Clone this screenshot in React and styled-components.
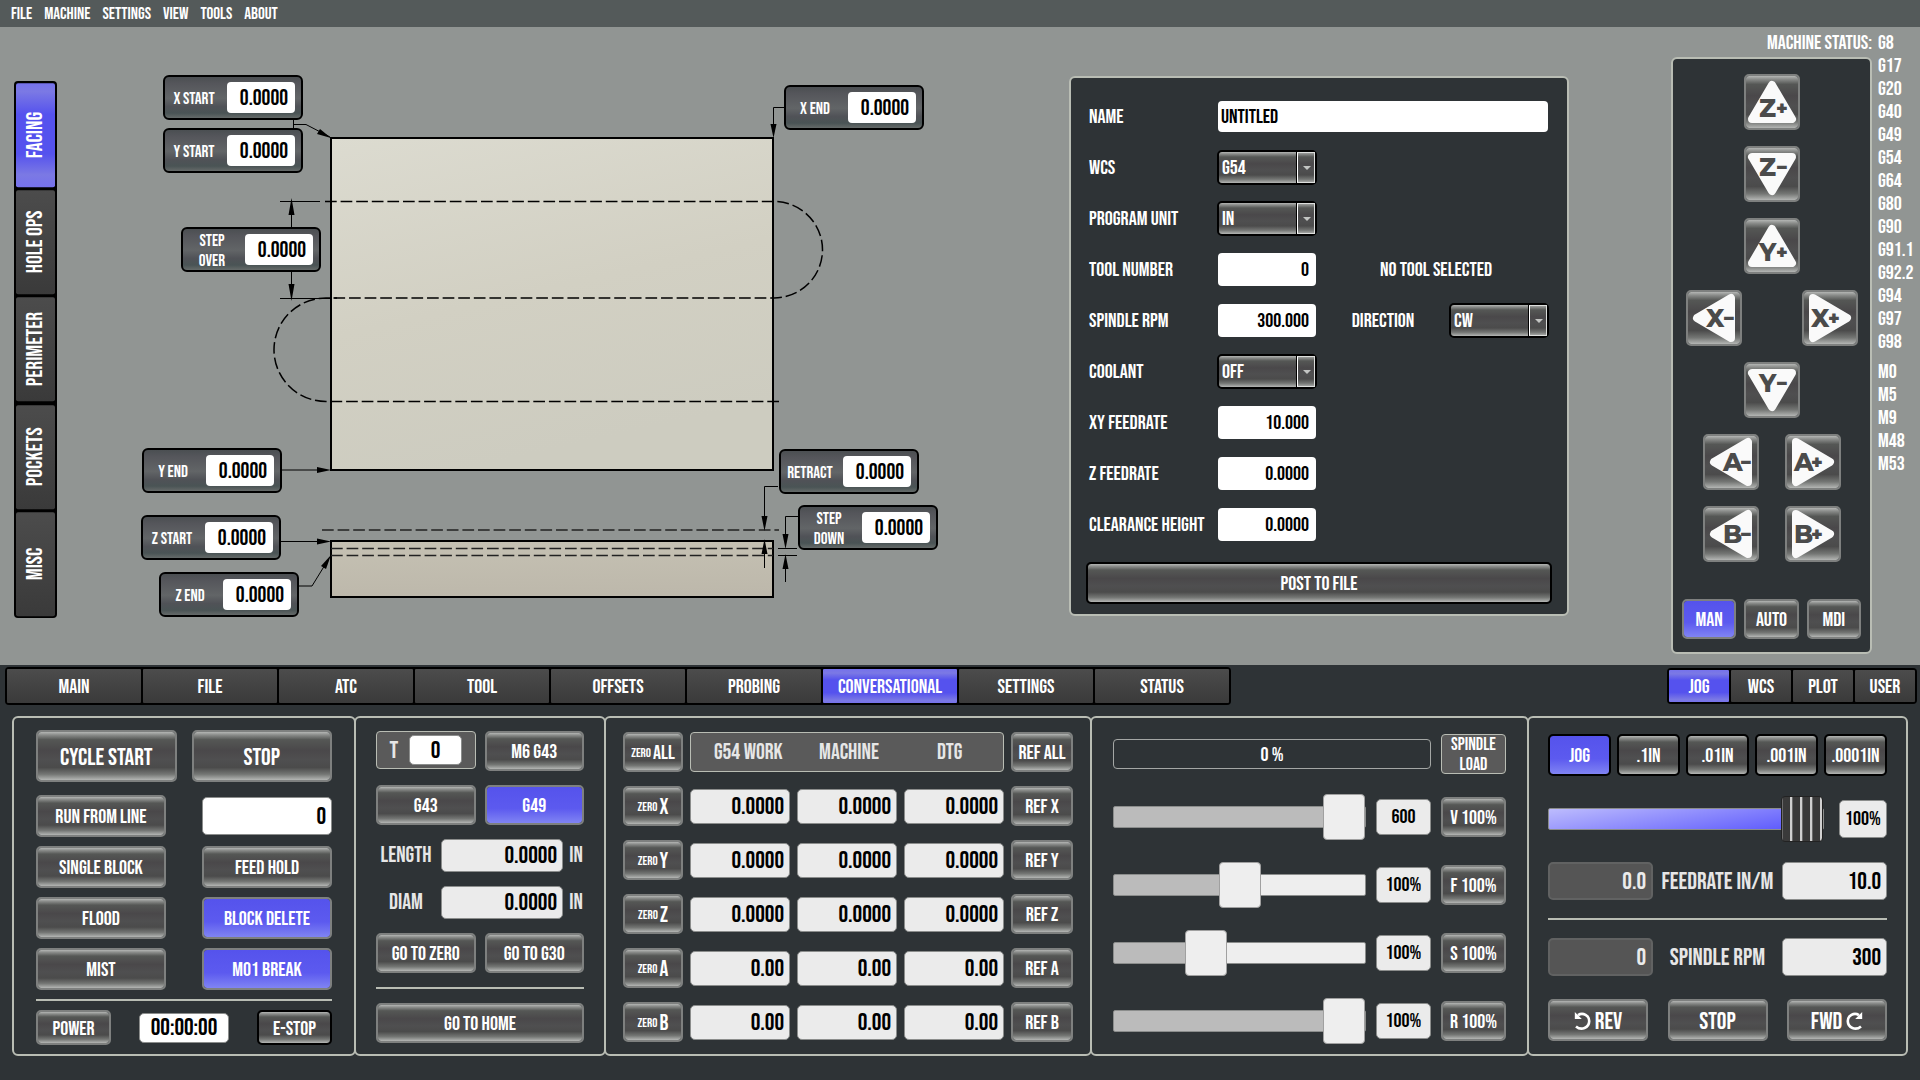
import React from "react";
import styled, { createGlobalStyle, css } from "styled-components";

const GlobalStyle = createGlobalStyle`
  * {
    box-sizing: border-box;
  }

  body {
    margin: 0;
    background: #2e3336;
    color: #fff;
    font-family: "Bebas Neue", Oswald, "Roboto Condensed", sans-serif;
    font-size: 20px;
  }

  button, input, select {
    margin: 0;
    padding: 0;
    font: inherit;
    color: inherit;
  }
`;

const steel = css`
  background: linear-gradient(
    to bottom,
    #b4b6b4 0%,
    #8b8d8b 6%,
    #555755 16%,
    #4a484a 38%,
    #4f4f50 58%,
    #4b4b4b 74%,
    #747674 88%,
    #b4b6b4 100%
  );
`;

const blue = css`
  background: linear-gradient(to bottom, #5553ec 0%, #5c5aef 60%, #8084f3 100%);
`;

const blueTab = css`
  background: linear-gradient(
    to bottom,
    #7672ec 0%,
    #7b79e4 12%,
    #5552ee 32%,
    #5552ee 70%,
    #7b79e4 92%,
    #7672ec 100%
  );
`;

const Screen = styled.div`
  display: flex;
  flex-direction: column;
  min-height: 100vh;
`;

const MenuBar = styled.nav`
  display: flex;
  align-items: center;
  gap: 12px;
  height: 27px;
  padding: 0 11px;
  background: #545a5a;
`;

const MenuItem = styled.a`
  color: #fff;
  font-size: 17px;
  line-height: 24px;
  text-decoration: none;
`;

const Main = styled.main`
  display: flex;
  flex: 1;
  align-items: flex-start;
  padding: 0 0 11px 14px;
  background: #919593;
`;

const SideTabs = styled.div`
  display: flex;
  flex-direction: column;
  gap: 3px;
  width: 43px;
  height: 537px;
  margin-top: 54px;
  padding: 2px;
  border-radius: 4px;
  background: #000;
`;

const SideTab = styled.button`
  flex: 1;
  border: 0;
  border-radius: 2px;
  background: linear-gradient(to top, #4c4c4c, #3a3a3a);
  font-size: 22px;
  writing-mode: vertical-rl;
  transform: rotate(180deg);
  ${(props) => props.$active && blueTab}
`;

const Canvas = styled.div`
  position: relative;
  flex: 1;
  min-width: 890px;
  height: 620px;
`;

const Drawing = styled.svg`
  display: block;
  width: 890px;
  height: 620px;
`;

const Callout = styled.label`
  position: absolute;
  left: ${(props) => props.$x}px;
  top: ${(props) => props.$y}px;
  display: flex;
  align-items: center;
  width: 140px;
  height: 45px;
  padding-right: 6px;
  border: 2px solid #000;
  border-radius: 6px;
  background: linear-gradient(
    to bottom,
    #4b4f52 0%,
    #55565b 16%,
    #626567 52%,
    #505257 72%,
    #4a5455 88%,
    #656a69 100%
  );
`;

const CalloutText = styled.span`
  flex: 1;
  padding: 2px 8px 0 4px;
  font-size: 17px;
  line-height: 20px;
  text-align: center;
`;

const CalloutInput = styled.input`
  width: 68px;
  height: 31px;
  padding: 1px 7px 0 0;
  border: 0;
  border-radius: 4px;
  background: #fff;
  color: #000;
  font-size: 22px;
  text-align: right;
`;

const FormPanel = styled.form`
  width: 500px;
  margin-top: 49px;
  padding: 13px 15px 10px;
  border: 2px solid #b9bdb4;
  border-radius: 6px;
  background: #2e3336;
`;

const FormRow = styled.div`
  display: grid;
  grid-template-columns: 128px 100px 1fr 100px;
  align-items: center;
  height: 51px;
  padding: 0 3px;
`;

const FormInput = styled.input`
  height: 33px;
  margin: 0 1px;
  padding: 0 7px 0 3px;
  border: 0;
  border-radius: 4px;
  background: #fff;
  color: #000;
  text-align: right;
  min-width: 0;
`;

const NameInput = styled(FormInput)`
  grid-column: 2 / -1;
  height: 31px;
  text-align: left;
`;

const ToolNote = styled.span`
  grid-column: 3 / -1;
  padding-left: 6px;
  text-align: center;
`;

const SideLabel = styled.label`
  text-align: center;
`;

const SelectWrap = styled.div`
  position: relative;

  &::before {
    content: "";
    position: absolute;
    top: 2px;
    right: 2px;
    bottom: 2px;
    width: 16px;
    border: 1px solid #dcdedc;
    border-left: 1px solid #fff;
    box-shadow: -1px 0 0 #000;
    pointer-events: none;
  }

  &::after {
    content: "";
    position: absolute;
    top: 16px;
    right: 6px;
    border: 4px solid transparent;
    border-top-color: #c3c5c3;
    border-bottom-width: 0;
    pointer-events: none;
  }
`;

const FormSelect = styled.select`
  display: block;
  width: 100%;
  height: 35px;
  padding-left: 3px;
  border: 2px solid #000;
  border-radius: 5px;
  appearance: none;
  ${steel}
`;

const Button = styled.button`
  display: flex;
  align-items: center;
  justify-content: center;
  gap: ${(props) => props.$gap || 4}px;
  width: ${(props) => (props.$w ? props.$w + "px" : "auto")};
  height: ${(props) => props.$h || 40}px;
  padding-top: 2px;
  border: 2px solid ${(props) => (props.$dark ? "#000" : "#7e807f")};
  border-radius: 5px;
  font-size: ${(props) => props.$size || 20}px;
  white-space: nowrap;
  ${(props) => (props.$active ? blue : steel)}
  background-clip: padding-box;
`;

const PostButton = styled(Button)`
  width: 100%;
  margin-top: 12px;
`;

const JogColumn = styled.div`
  width: 201px;
  margin-left: 102px;
`;

const StatusTitle = styled.div`
  height: 30px;
  line-height: 32px;
  text-align: right;
  white-space: nowrap;
`;

const JogPanel = styled.section`
  display: flex;
  flex-direction: column;
  align-items: center;
  gap: 16px;
  height: 597px;
  padding: 15px 9px 13px;
  border: 2px solid #b9bdb4;
  border-radius: 6px;
  background: #2e3336;
`;

const JogRow = styled.div`
  display: flex;
  gap: ${(props) => props.$gap}px;
`;

const ModeRow = styled.div`
  display: grid;
  grid-template-columns: repeat(3, 1fr);
  gap: 8px;
  width: 100%;
  margin-top: auto;
`;

const JogKey = styled(Button)`
  width: 56px;
  height: 56px;
  padding: 0;
`;

const JogArrow = styled.svg`
  flex: none;
  width: 56px;
  height: 56px;
`;

const AxisText = styled.text`
  fill: #4b4b4b;
  font-family: Montserrat, Inter, "Open Sans", sans-serif;
  font-size: ${(props) => props.$size}px;
  font-weight: ${(props) => props.$weight};
`;

const StatusCodes = styled.ul`
  width: 48px;
  margin: 0;
  padding: 5px 0 0 6px;
  list-style: none;
  line-height: 23px;
`;

const StatusGroup = styled.li`
  margin-bottom: 7px;
  white-space: pre-line;
`;

const Lower = styled.div`
  padding-bottom: 24px;
`;

const TabBar = styled.div`
  display: grid;
  grid-template-columns: minmax(0, 1226fr) minmax(0, 436fr) minmax(0, 250fr);
  align-items: center;
  height: 51px;
  padding: 0 3px 9px 5px;
`;

const Tabs = styled.div`
  display: grid;
  grid-auto-flow: column;
  grid-auto-columns: 1fr;
  gap: 2px;
  height: ${(props) => props.$h}px;
  padding: 2px;
  border-radius: 4px;
  background: #000;
`;

const Tab = styled.button`
  padding-top: 2px;
  border: 0;
  border-radius: 1px;
  background: linear-gradient(to bottom, #4c4c4c, #3a3a3a);
  ${(props) => props.$active && blueTab}
`;

const UserTabs = styled(Tabs)`
  grid-column: 3;
`;

const Panels = styled.div`
  display: grid;
  grid-template-columns: minmax(0, 342fr) minmax(0, 250fr) minmax(0, 486fr) minmax(0, 437fr) minmax(0, 381fr);
  height: 340px;
  margin: 0 12px;
`;

const Panel = styled.section`
  display: flex;
  flex-direction: column;
  padding: ${(props) => props.$pad};
  border: 2px solid #b9bdb4;
  border-radius: 6px;

  &:not(:last-child) {
    margin-right: -2px;
  }
`;

const Rule = styled.hr`
  width: 100%;
  height: 2px;
  margin: 0;
  border: 0;
  background: #b9bdb4;
`;

const JogRule = styled(Rule)`
  margin: -2px 0;
`;

const Pair = styled.div`
  display: grid;
  grid-template-columns: 1fr 1fr;
  gap: ${(props) => props.$gap}px;
`;

const CycleGrid = styled.div`
  display: grid;
  grid-template-columns: 1fr 1fr;
  align-items: center;
  gap: 9px 36px;
  margin: 13px 0 9px;
`;

const PowerRow = styled.div`
  display: flex;
  align-items: center;
  justify-content: space-between;
  margin-top: auto;
`;

const Stack = styled.div`
  display: flex;
  flex-direction: column;
  gap: ${(props) => props.$gap}px;
`;

const Field = styled.input`
  display: block;
  width: ${(props) => (props.$w ? props.$w + "px" : "100%")};
  height: ${(props) => props.$h || 35}px;
  min-width: 0;
  padding: 0 5px;
  border: 1px solid #8b8d8c;
  border-radius: 5px;
  background: ${(props) => (props.$white ? "#fff" : "#ebebeb")};
  color: #000;
  font-size: ${(props) => props.$size || 24}px;
  text-align: ${(props) => props.$align || "right"};
`;

const DarkField = styled(Field)`
  border: 2px solid #616262;
  background: #555;
  color: #ebebeb;
`;

const ToolBox = styled.label`
  display: flex;
  align-items: center;
  justify-content: center;
  gap: 11px;
  height: 38px;
  border: 1px solid #b9bdb4;
  border-radius: 4px;
  background: #5a5a5a;
  color: #e6e6e6;
  font-size: 24px;
`;

const MeasureRow = styled.label`
  display: grid;
  grid-template-columns: 60px 122px 1fr;
  gap: 5px;
  align-items: center;
  height: 33px;
  color: #e6e6e6;
  font-size: 22px;
  text-align: center;
`;

const Dro = styled.table`
  display: block;

  tbody {
    display: grid;
    gap: 14px;
  }

  tr {
    display: grid;
    grid-template-columns: 60px 1fr 1fr 1fr 62px;
    gap: 7px;
    align-items: center;
  }

  th, td {
    display: block;
    padding: 0;
    font-weight: 400;
  }

  button {
    width: 100%;
  }
`;

const DroHead = styled.th`
  grid-column: span 3;
`;

const DroHeadBox = styled.div`
  display: grid;
  grid-template-columns: 1fr 1fr 1fr;
  align-items: center;
  height: 40px;
  padding: 0 3px 0 7px;
  border: 1px solid #b9bdb4;
  border-radius: 4px;
  background: #5a5a5a;
  color: #e6e6e6;
  font-size: 22px;
  text-align: center;
`;

const Small = styled.small`
  font-size: 13px;
`;

const OverrideRow = styled.div`
  display: grid;
  grid-template-columns: 1fr 55px 65px;
  grid-template-rows: 40px;
  align-items: center;
  gap: 10px;
`;

const LoadBar = styled.div`
  grid-column: span 2;
  display: flex;
  align-items: center;
  justify-content: center;
  height: 30px;
  padding-top: 2px;
  border: 1px solid #a4a7a5;
  border-radius: 4px;
`;

const LoadTag = styled.div`
  height: 40px;
  border: 1px solid #b9bdb4;
  border-radius: 4px;
  background: #5a5a5a;
  font-size: 18px;
  line-height: 20px;
  text-align: center;
`;

const Slider = styled.input.attrs({ type: "range" })`
  display: block;
  width: 100%;
  height: 46px;
  min-width: 0;
  background: transparent;
  appearance: none;

  &::-webkit-slider-runnable-track {
    height: 22px;
    border: 1px solid #8b8d8c;
    border-radius: 2px;
    background: ${(props) =>
      props.$blue
        ? "linear-gradient(170deg, #bdbcfd 0%, #5f5cfd 90%)"
        : `linear-gradient(to right, #bbb ${props.defaultValue}%, #eee ${props.defaultValue}%)`};
  }

  &::-webkit-slider-thumb {
    width: 42px;
    height: 46px;
    margin-top: -13px;
    border: 1px solid ${(props) => (props.$blue ? "#222" : "#a0a0a0")};
    border-radius: 4px;
    background: ${(props) =>
      props.$blue
        ? "repeating-linear-gradient(to right, #6a6a6a 0 1px, #3a3a3a 1px 8px, #d0d0d0 8px 10px)"
        : "#eee"};
    appearance: none;
  }
`;

const Steps = styled.div`
  display: grid;
  grid-template-columns: repeat(5, 1fr);
  gap: 6px;
`;

const JogSliderRow = styled.div`
  display: grid;
  grid-template-columns: 1fr 48px;
  align-items: center;
  gap: 15px;
`;

const RateRow = styled.div`
  display: grid;
  grid-template-columns: 105px 1fr 105px;
  align-items: center;
  color: #e6e6e6;
  font-size: 24px;
  text-align: center;
  white-space: nowrap;
`;

const SpindleButtons = styled.div`
  display: grid;
  grid-template-columns: repeat(3, 100px);
  justify-content: space-between;
  margin-top: auto;
`;

const Icon = styled.svg`
  width: 17px;
  height: 18px;
`;

const menus = ["FILE", "MACHINE", "SETTINGS", "VIEW", "TOOLS", "ABOUT"];
const sideTabs = ["FACING", "HOLE OPS", "PERIMETER", "POCKETS", "MISC"];
const mainTabs = ["MAIN", "FILE", "ATC", "TOOL", "OFFSETS", "PROBING", "CONVERSATIONAL", "SETTINGS", "STATUS"];
const userTabs = ["JOG", "WCS", "PLOT", "USER"];
const jogSteps = ["JOG", ".1IN", ".01IN", ".001IN", ".0001IN"];
const gCodes = ["G8", "G17", "G20", "G40", "G49", "G54", "G64", "G80", "G90", "G91.1", "G92.2", "G94", "G97", "G98"];
const mCodes = ["M0", "M5", "M9", "M48", "M53"];

const callouts = [
  { label: "X START", x: 106, y: 48 },
  { label: "Y START", x: 106, y: 101 },
  { label: "STEP OVER", x: 124, y: 200 },
  { label: "Y END", x: 85, y: 421 },
  { label: "Z START", x: 84, y: 488 },
  { label: "Z END", x: 102, y: 545 },
  { label: "X END", x: 727, y: 58 },
  { label: "RETRACT", x: 722, y: 422 },
  { label: "STEP DOWN", x: 741, y: 478 },
];

const axes = [
  { name: "X", value: "0.0000" },
  { name: "Y", value: "0.0000" },
  { name: "Z", value: "0.0000" },
  { name: "A", value: "0.00" },
  { name: "B", value: "0.00" },
];

const overrides = [
  { name: "V", value: "600", pos: 100 },
  { name: "F", value: "100%", pos: 50 },
  { name: "S", value: "100%", pos: 34 },
  { name: "R", value: "100%", pos: 100 },
];

const arrowShapes = {
  up: { points: "28,11 48,45 8,45", x: 15, y: 43 },
  down: { points: "8,11 48,11 28,45", x: 15, y: 30 },
  left: { points: "11,28 45,8 45,48", x: 20, y: 37 },
  right: { points: "11,8 45,28 11,48", x: 9, y: 37 },
};

function JogButton({ axis, sign, dir }) {
  const shape = arrowShapes[dir];
  return (
    <JogKey aria-label={axis + sign}>
      <JogArrow viewBox="0 0 56 56">
        <polygon points={shape.points} fill="#fafafa" stroke="#fafafa" strokeWidth="8" strokeLinejoin="round" />
        <AxisText x={shape.x} y={shape.y} $size={25} $weight={800}>
          {axis}
        </AxisText>
        <AxisText x={shape.x + 17} y={shape.y - 2} $size={19} $weight={900}>
          {sign === "-" ? "−" : "+"}
        </AxisText>
      </JogArrow>
    </JogKey>
  );
}

function FacingDiagram() {
  return (
    <Canvas>
      <Drawing viewBox="57 27 890 620" fill="none" stroke="#000">
        <defs>
          <linearGradient id="top" x1="0" y1="0" x2="0.3" y2="1">
            <stop offset="0" stopColor="#dcdbd0" />
            <stop offset="0.55" stopColor="#d2d0c3" />
            <stop offset="1" stopColor="#cdccc0" />
          </linearGradient>
          <linearGradient id="side" x1="0" y1="0" x2="0.1" y2="1">
            <stop offset="0" stopColor="#c5c1b3" />
            <stop offset="1" stopColor="#bdb8ab" />
          </linearGradient>
        </defs>
        {/* stock, top and side view */}
        <rect x="331" y="138" width="442" height="332" fill="url(#top)" strokeWidth="2" />
        <rect x="331" y="541" width="442" height="56" fill="url(#side)" strokeWidth="2" />
        {/* tool path */}
        <g strokeDasharray="11.7 3.9" strokeWidth="1.5">
          <path d="M325 201.5H774A48.5 48.25 0 0 1 774 298H331" />
          <path d="M779 401.5H326A52 51.75 0 0 1 326 298H337" />
          <path d="M322 530H779" stroke="#222" />
          <path d="M331 548.5H773M331 555.5H773" stroke="#222" />
        </g>
        {/* leader lines */}
        <g strokeWidth="1">
          <path d="M280 201.5H320M280 298.5H330M291.5 205V227M291.5 272V295" />
          <path d="M293.5 120V128M293.5 124.5H306L330 137" />
          <path d="M784 107.5H773.5V130M282 470H325M281 541.5H325M299 586H312L328 560" />
          <path d="M778 486.5H764.5V520M764.5 550V568" />
          <path d="M799 516.5H785.5V540M785.5 562V582M778 548.5H797M778 555.5H797" />
        </g>
        <g fill="#000" stroke="none">
          <path d="M291.5 198L294.5 215H288.5ZM291.5 301L294.5 284H288.5Z" />
          <path d="M331 138L317 134L320 129Z" />
          <path d="M773.5 138L770.5 124H776.5Z" />
          <path d="M331 470L317 467V473ZM331 541.5L317 538.5V544.5Z" />
          <path d="M331 555L321 566L326 569Z" />
          <path d="M764.5 531L761.5 516H767.5ZM764.5 539L761.5 554H767.5Z" />
          <path d="M785.5 549L782.5 534H788.5ZM785.5 554L782.5 569H788.5Z" />
        </g>
      </Drawing>
      {callouts.map((c) => (
        <Callout key={c.label} $x={c.x} $y={c.y}>
          <CalloutText>{c.label}</CalloutText>
          <CalloutInput type="text" defaultValue="0.0000" />
        </Callout>
      ))}
    </Canvas>
  );
}

function Select({ id, value }) {
  return (
    <SelectWrap>
      <FormSelect id={id} defaultValue={value}>
        <option>{value}</option>
      </FormSelect>
    </SelectWrap>
  );
}

function ProgramForm() {
  return (
    <FormPanel onSubmit={(e) => e.preventDefault()}>
      <FormRow>
        <label htmlFor="name">NAME</label>
        <NameInput id="name" type="text" defaultValue="UNTITLED" />
      </FormRow>
      <FormRow>
        <label htmlFor="wcs">WCS</label>
        <Select id="wcs" value="G54" />
      </FormRow>
      <FormRow>
        <label htmlFor="unit">PROGRAM UNIT</label>
        <Select id="unit" value="IN" />
      </FormRow>
      <FormRow>
        <label htmlFor="tool">TOOL NUMBER</label>
        <FormInput id="tool" type="text" defaultValue="0" />
        <ToolNote>NO TOOL SELECTED</ToolNote>
      </FormRow>
      <FormRow>
        <label htmlFor="rpm">SPINDLE RPM</label>
        <FormInput id="rpm" type="text" defaultValue="300.000" />
        <SideLabel htmlFor="direction">DIRECTION</SideLabel>
        <Select id="direction" value="CW" />
      </FormRow>
      <FormRow>
        <label htmlFor="coolant">COOLANT</label>
        <Select id="coolant" value="OFF" />
      </FormRow>
      <FormRow>
        <label htmlFor="xyfeed">XY FEEDRATE</label>
        <FormInput id="xyfeed" type="text" defaultValue="10.000" />
      </FormRow>
      <FormRow>
        <label htmlFor="zfeed">Z FEEDRATE</label>
        <FormInput id="zfeed" type="text" defaultValue="0.0000" />
      </FormRow>
      <FormRow>
        <label htmlFor="clearance">CLEARANCE HEIGHT</label>
        <FormInput id="clearance" type="text" defaultValue="0.0000" />
      </FormRow>
      <PostButton $h={42} $dark>
        POST TO FILE
      </PostButton>
    </FormPanel>
  );
}

function CyclePanel() {
  return (
    <Panel $pad="12px 22px 9px">
      <Pair $gap={15}>
        <Button $h={52} $size={24}>CYCLE START</Button>
        <Button $h={52} $size={24}>STOP</Button>
      </Pair>
      <CycleGrid>
        <Button $h={42}>RUN FROM LINE</Button>
        <Field $white $h={38} aria-label="Run from line" defaultValue="0" />
        <Button $h={42}>SINGLE BLOCK</Button>
        <Button $h={42}>FEED HOLD</Button>
        <Button $h={42}>FLOOD</Button>
        <Button $h={42} $active>BLOCK DELETE</Button>
        <Button $h={42}>MIST</Button>
        <Button $h={42} $active>M01 BREAK</Button>
      </CycleGrid>
      <Rule />
      <PowerRow>
        <Button $w={75} $h={35}>POWER</Button>
        <Field $white $w={90} $h={30} $align="center" aria-label="Run time" readOnly value="00:00:00" />
        <Button $w={75} $h={35} $dark>E-STOP</Button>
      </PowerRow>
    </Panel>
  );
}

function ToolPanel() {
  return (
    <Panel $pad="13px 20px 0">
      <Stack $gap={14}>
        <Pair $gap={9}>
          <ToolBox>
            T
            <Field $white $w={53} $h={30} $align="center" defaultValue="0" />
          </ToolBox>
          <Button>M6 G43</Button>
        </Pair>
        <Pair $gap={9}>
          <Button>G43</Button>
          <Button $active>G49</Button>
        </Pair>
        <MeasureRow>
          LENGTH
          <Field $h={33} readOnly value="0.0000" />
          <span>IN</span>
        </MeasureRow>
        <MeasureRow>
          DIAM
          <Field $h={33} readOnly value="0.0000" />
          <span>IN</span>
        </MeasureRow>
        <Pair $gap={9}>
          <Button>GO TO ZERO</Button>
          <Button>GO TO G30</Button>
        </Pair>
        <Rule />
        <Button>GO TO HOME</Button>
      </Stack>
    </Panel>
  );
}

function DroPanel() {
  return (
    <Panel $pad="14px 17px 0">
      <Dro>
        <tbody>
          <tr>
            <td>
              <Button $gap={2}><Small>ZERO</Small> ALL</Button>
            </td>
            <DroHead colSpan={3}>
              <DroHeadBox>
                <span>G54 WORK</span>
                <span>MACHINE</span>
                <span>DTG</span>
              </DroHeadBox>
            </DroHead>
            <td>
              <Button>REF ALL</Button>
            </td>
          </tr>
          {axes.map((axis) => (
            <tr key={axis.name}>
              <td>
                <Button $size={22} $gap={2}><Small>ZERO</Small> {axis.name}</Button>
              </td>
              {["work", "machine", "dtg"].map((col) => (
                <td key={col}>
                  <Field aria-label={axis.name + " " + col} readOnly value={axis.value} />
                </td>
              ))}
              <td>
                <Button>REF {axis.name}</Button>
              </td>
            </tr>
          ))}
        </tbody>
      </Dro>
    </Panel>
  );
}

function OverridePanel() {
  return (
    <Panel $pad="16px 21px 0">
      <Stack $gap={23}>
        <OverrideRow>
          <LoadBar>0 %</LoadBar>
          <LoadTag>SPINDLE LOAD</LoadTag>
        </OverrideRow>
        <Stack $gap={28}>
          {overrides.map((o) => (
            <OverrideRow key={o.name}>
              <Slider aria-label={o.name + " override"} min="0" max="100" defaultValue={o.pos} />
              <Field $h={36} $size={20} $align="center" aria-label={o.name + " value"} readOnly value={o.value} />
              <Button>{o.name} 100%</Button>
            </OverrideRow>
          ))}
        </Stack>
      </Stack>
    </Panel>
  );
}

function JogSettingsPanel() {
  return (
    <Panel $pad="16px 19px 13px">
      <Stack $gap={20}>
        <Steps>
          {jogSteps.map((step) => (
            <Button key={step} $h={42} $dark $active={step === "JOG"}>
              {step}
            </Button>
          ))}
        </Steps>
        <JogSliderRow>
          <Slider $blue aria-label="Jog speed" min="0" max="100" defaultValue="100" />
          <Field $h={38} $size={20} $align="center" aria-label="Jog percent" readOnly value="100%" />
        </JogSliderRow>
        <RateRow>
          <DarkField $h={38} aria-label="Actual feedrate" readOnly value="0.0" />
          <label htmlFor="feedrate">FEEDRATE IN/M</label>
          <Field id="feedrate" $h={38} defaultValue="10.0" />
        </RateRow>
        <JogRule />
        <RateRow>
          <DarkField $h={38} aria-label="Actual spindle rpm" readOnly value="0" />
          <label htmlFor="spindle">SPINDLE RPM</label>
          <Field id="spindle" $h={38} defaultValue="300" />
        </RateRow>
      </Stack>
      <SpindleButtons>
        <Button $h={42} $size={24}>
          <Icon viewBox="0 0 17 18" aria-hidden="true">
            <path d="M4 3.2C9 0 15.4 3.6 15.2 9.4C15 15.6 7.4 19 2 14.4" fill="none" stroke="#fff" strokeWidth="2.6" />
            <path d="M0.8 0V7H7.8Z" fill="#fff" />
          </Icon>
          REV
        </Button>
        <Button $h={42} $size={24}>STOP</Button>
        <Button $h={42} $size={24}>
          FWD
          <Icon viewBox="0 0 17 18" aria-hidden="true">
            <path d="M13 3.2C8 0 1.6 3.6 1.8 9.4C2 15.6 9.6 19 15 14.4" fill="none" stroke="#fff" strokeWidth="2.6" />
            <path d="M16.2 0V7H9.2Z" fill="#fff" />
          </Icon>
        </Button>
      </SpindleButtons>
    </Panel>
  );
}

function App() {
  return (
    <Screen>
      <GlobalStyle />
      <MenuBar>
        {menus.map((item) => (
          <MenuItem key={item} href="#">
            {item}
          </MenuItem>
        ))}
      </MenuBar>
      <Main>
        <SideTabs>
          {sideTabs.map((tab) => (
            <SideTab key={tab} $active={tab === "FACING"}>
              {tab}
            </SideTab>
          ))}
        </SideTabs>
        <FacingDiagram />
        <ProgramForm />
        <JogColumn>
          <StatusTitle>MACHINE STATUS:</StatusTitle>
          <JogPanel>
            <JogButton axis="Z" sign="+" dir="up" />
            <JogButton axis="Z" sign="-" dir="down" />
            <JogButton axis="Y" sign="+" dir="up" />
            <JogRow $gap={60}>
              <JogButton axis="X" sign="-" dir="left" />
              <JogButton axis="X" sign="+" dir="right" />
            </JogRow>
            <JogButton axis="Y" sign="-" dir="down" />
            <JogRow $gap={26}>
              <JogButton axis="A" sign="-" dir="left" />
              <JogButton axis="A" sign="+" dir="right" />
            </JogRow>
            <JogRow $gap={26}>
              <JogButton axis="B" sign="-" dir="left" />
              <JogButton axis="B" sign="+" dir="right" />
            </JogRow>
            <ModeRow>
              <Button $active>MAN</Button>
              <Button>AUTO</Button>
              <Button>MDI</Button>
            </ModeRow>
          </JogPanel>
        </JogColumn>
        <StatusCodes>
          <StatusGroup>{gCodes.join("\n")}</StatusGroup>
          <StatusGroup>{mCodes.join("\n")}</StatusGroup>
        </StatusCodes>
      </Main>
      <Lower>
        <TabBar>
          <Tabs $h={38}>
            {mainTabs.map((tab) => (
              <Tab key={tab} $active={tab === "CONVERSATIONAL"}>
                {tab}
              </Tab>
            ))}
          </Tabs>
          <UserTabs $h={36}>
            {userTabs.map((tab) => (
              <Tab key={tab} $active={tab === "JOG"}>
                {tab}
              </Tab>
            ))}
          </UserTabs>
        </TabBar>
        <Panels>
          <CyclePanel />
          <ToolPanel />
          <DroPanel />
          <OverridePanel />
          <JogSettingsPanel />
        </Panels>
      </Lower>
    </Screen>
  );
}

export default App;
